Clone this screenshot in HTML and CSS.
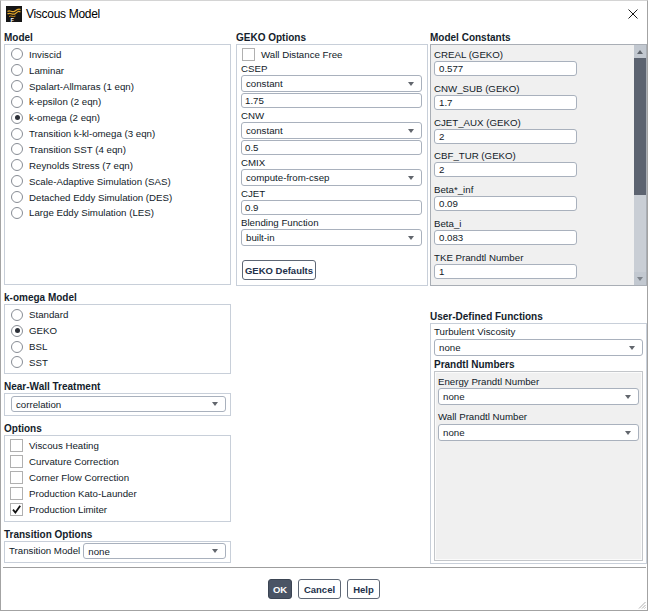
FILE: index.html
```html
<!DOCTYPE html>
<html>
<head>
<meta charset="utf-8">
<title>Viscous Model</title>
<link rel="stylesheet" href="styles.css">
</head>
<body>
<div class="window">
  <div class="titlebar">
    <svg class="appicon" width="16" height="16" viewBox="0 0 16 16">
      <rect width="16" height="16" fill="#151515"/>
      <path d="M1.5 5.5 C4 3, 6 7.5, 9 5 S13 2.5, 14.5 3.5" stroke="#e3a62a" stroke-width="1.2" fill="none"/>
      <path d="M1.5 8 C4 5.5, 6.5 10, 9.5 7.5 S13 5, 14.5 6" stroke="#e3a62a" stroke-width="1.2" fill="none"/>
      <path d="M3 10.5 C5 9, 7 11.5, 9.5 10" stroke="#c78a1c" stroke-width="1" fill="none"/>
      <text x="4.5" y="15.6" font-size="5.5" font-weight="bold" fill="#ffffff" font-family="Liberation Sans, sans-serif">F</text>
    </svg>
    <span class="title">Viscous Model</span>
    <svg class="close" width="10" height="10" viewBox="0 0 10 10">
      <path d="M0.5 0.5 L9.5 9.5 M9.5 0.5 L0.5 9.5" stroke="#1a1a1a" stroke-width="1" fill="none"/>
    </svg>
  </div>

  <div class="main">
    <div class="col col1">
      <div class="sec-label">Model</div>
      <div class="box box-model">
        <div class="opt"><span class="radio"></span>Inviscid</div>
        <div class="opt"><span class="radio"></span>Laminar</div>
        <div class="opt"><span class="radio"></span>Spalart-Allmaras (1 eqn)</div>
        <div class="opt"><span class="radio"></span>k-epsilon (2 eqn)</div>
        <div class="opt"><span class="radio on"></span>k-omega (2 eqn)</div>
        <div class="opt"><span class="radio"></span>Transition k-kl-omega (3 eqn)</div>
        <div class="opt"><span class="radio"></span>Transition SST (4 eqn)</div>
        <div class="opt"><span class="radio"></span>Reynolds Stress (7 eqn)</div>
        <div class="opt"><span class="radio"></span>Scale-Adaptive Simulation (SAS)</div>
        <div class="opt"><span class="radio"></span>Detached Eddy Simulation (DES)</div>
        <div class="opt"><span class="radio"></span>Large Eddy Simulation (LES)</div>
      </div>

      <div class="sec-label mt">k-omega Model</div>
      <div class="box box-komega">
        <div class="opt"><span class="radio"></span>Standard</div>
        <div class="opt"><span class="radio on"></span>GEKO</div>
        <div class="opt"><span class="radio"></span>BSL</div>
        <div class="opt"><span class="radio"></span>SST</div>
      </div>

      <div class="sec-label mt">Near-Wall Treatment</div>
      <div class="box box-near">
        <div class="sel sel-short"><span>correlation</span></div>
      </div>

      <div class="sec-label mt">Options</div>
      <div class="box box-options">
        <div class="opt"><span class="chk"></span>Viscous Heating</div>
        <div class="opt"><span class="chk"></span>Curvature Correction</div>
        <div class="opt"><span class="chk"></span>Corner Flow Correction</div>
        <div class="opt"><span class="chk"></span>Production Kato-Launder</div>
        <div class="opt"><span class="chk"><svg width="11" height="11" viewBox="0 0 11 11"><path d="M2 5.6 L4.4 8.6 L9.2 1.8" stroke="#111" stroke-width="1.8" fill="none"/></svg></span>Production Limiter</div>
      </div>

      <div class="sec-label mt">Transition Options</div>
      <div class="box box-trans">
        <span class="trans-text">Transition Model</span>
        <div class="sel sel-short sel-trans"><span>none</span></div>
      </div>
    </div>

    <div class="col col2">
      <div class="sec-label">GEKO Options</div>
      <div class="box box-geko">
        <div class="chk-row"><span class="chk chk-geko"></span>Wall Distance Free</div>
        <div class="flabel">CSEP</div>
        <div class="sel"><span>constant</span></div>
        <div class="inp inp-after">1.75</div>
        <div class="flabel">CNW</div>
        <div class="sel"><span>constant</span></div>
        <div class="inp inp-after">0.5</div>
        <div class="flabel">CMIX</div>
        <div class="sel"><span>compute-from-csep</span></div>
        <div class="flabel">CJET</div>
        <div class="inp">0.9</div>
        <div class="flabel">Blending Function</div>
        <div class="sel"><span>built-in</span></div>
        <button class="btn btn-defaults">GEKO Defaults</button>
      </div>
    </div>

    <div class="col col3">
      <div class="sec-label">Model Constants</div>
      <div class="box box-const">
        <div class="const-list">
          <div class="cgroup"><div class="flabel">CREAL (GEKO)</div><div class="inp inp-const">0.577</div></div>
          <div class="cgroup"><div class="flabel">CNW_SUB (GEKO)</div><div class="inp inp-const">1.7</div></div>
          <div class="cgroup"><div class="flabel">CJET_AUX (GEKO)</div><div class="inp inp-const">2</div></div>
          <div class="cgroup"><div class="flabel">CBF_TUR (GEKO)</div><div class="inp inp-const">2</div></div>
          <div class="cgroup"><div class="flabel">Beta*_inf</div><div class="inp inp-const">0.09</div></div>
          <div class="cgroup"><div class="flabel">Beta_i</div><div class="inp inp-const">0.083</div></div>
          <div class="cgroup"><div class="flabel">TKE Prandtl Number</div><div class="inp inp-const">1</div></div>
        </div>
        <div class="scrollbar">
          <div class="sb-btn"><span class="tri-up"></span></div>
          <div class="sb-thumb"></div>
          <div class="sb-track"></div>
          <div class="sb-btn"><span class="tri-down"></span></div>
        </div>
      </div>

      <div class="sec-label udf-label">User-Defined Functions</div>
      <div class="box box-udf">
        <div class="flabel">Turbulent Viscosity</div>
        <div class="sel sel-mt"><span>none</span></div>
        <div class="plabel">Prandtl Numbers</div>
        <div class="pbox">
          <div class="flabel">Energy Prandtl Number</div>
          <div class="sel"><span>none</span></div>
          <div class="flabel flabel-mt">Wall Prandtl Number</div>
          <div class="sel sel-mt"><span>none</span></div>
        </div>
      </div>
    </div>
  </div>

  <div class="sep"></div>
  <div class="footer">
    <button class="btn btn-primary btn-ok">OK</button>
    <button class="btn btn-cancel">Cancel</button>
    <button class="btn btn-help">Help</button>
  </div>
  <svg class="grip" width="8" height="8" viewBox="0 0 8 8">
    <path d="M7.5 1 L1 7.5 M7.5 4 L4 7.5 M7.5 6.5 L6.5 7.5" stroke="#9a9a9a" stroke-width="0.8" fill="none"/>
  </svg>
</div>
</body>
</html>
```

FILE: styles.css
```css
* {
  box-sizing: border-box;
  margin: 0;
  padding: 0;
}

html, body {
  background: #ffffff;
}

body {
  font-family: "Liberation Sans", Arial, sans-serif;
  font-size: 9.7px;
  color: #111a28;
}

.window {
  position: relative;
  width: 648px;
  height: 611px;
  border: 1px solid #a3a3a3;
  border-top-color: #d4d4d4;
  background: #ffffff;
  display: flex;
  flex-direction: column;
}

/* title bar */
.titlebar {
  flex: none;
  height: 29px;
  display: flex;
  align-items: flex-start;
  padding: 5px 0 0 5px;
}

.appicon {
  flex: none;
}

.title {
  margin-left: 4px;
  font-size: 12px;
  line-height: 16px;
  letter-spacing: -0.3px;
  color: #000000;
}

.close {
  margin-left: auto;
  margin-top: 3px;
  margin-right: 9px;
}

/* main area */
.main {
  flex: none;
  height: 537px;
  display: flex;
  padding: 1px 0 0 3px;
}

.col {
  display: flex;
  flex-direction: column;
  flex: none;
}

.col1 { width: 227px; }
.col2 { width: 192px; margin-left: 5px; }
.col3 { width: 217px; margin-left: 2px; }

.sec-label {
  font-weight: bold;
  font-size: 10px;
  line-height: 13px;
  height: 12px;
  margin-bottom: 1px;
  white-space: nowrap;
  color: #141d2c;
}

.sec-label.mt { margin-top: 6px; }

.box {
  border: 1px solid #c8cfd9;
  background: #ffffff;
}

/* radio / checkbox rows */
.opt {
  display: flex;
  align-items: center;
  height: 15.85px;
  white-space: nowrap;
}

.radio {
  flex: none;
  width: 12px;
  height: 12px;
  margin: 0 6px;
  border: 1px solid #878c94;
  border-radius: 50%;
  background: #ffffff;
  display: flex;
  align-items: center;
  justify-content: center;
}

.radio.on::after {
  content: "";
  width: 5px;
  height: 5px;
  border-radius: 50%;
  background: #2c3038;
}

.chk {
  flex: none;
  width: 13px;
  height: 13px;
  margin: 0 6px 0 5px;
  border: 1px solid #b0b0b0;
  background: #ffffff;
  display: flex;
  align-items: center;
  justify-content: center;
}

.box-model {
  height: 241px;
  padding-top: 1.5px;
}

.box-komega {
  height: 70px;
  padding-top: 2px;
}

.box-near {
  height: 23px;
  padding: 2px 4px 0 6px;
}

.box-options {
  height: 87px;
  padding-top: 2px;
}

.box-trans {
  height: 22px;
  padding: 1px 4px 0 4px;
  display: flex;
  align-items: flex-start;
}

.trans-text {
  line-height: 16px;
  white-space: nowrap;
}

/* select / input */
.sel {
  height: 17px;
  border: 1px solid #a9b1bd;
  border-radius: 3px;
  background: #ffffff;
  display: flex;
  align-items: center;
  justify-content: space-between;
  padding: 0 7px 0 4px;
  white-space: nowrap;
}

.sel::after {
  content: "";
  flex: none;
  border-left: 3.5px solid transparent;
  border-right: 3.5px solid transparent;
  border-top: 4px solid #62666d;
}

.sel-short {
  height: 16px;
}

.sel-trans {
  flex: 1;
  margin-left: 3px;
}

.sel-mt { margin-top: 1px; }

.inp {
  height: 15px;
  border: 1px solid #a9b1bd;
  border-radius: 3px;
  background: #ffffff;
  display: flex;
  align-items: center;
  padding-left: 3px;
}

.inp-after { margin-top: 1px; }

.flabel {
  height: 14px;
  line-height: 15px;
  white-space: nowrap;
}

.flabel-mt { margin-top: 4px; }

/* GEKO */
.box-geko {
  height: 242px;
  padding: 2px 5px 0 4px;
}

.chk-row {
  display: flex;
  align-items: center;
  height: 14px;
  white-space: nowrap;
}

.chk-geko {
  margin-left: 1px;
}

/* buttons */
.btn {
  font-family: "Liberation Sans", Arial, sans-serif;
  font-weight: bold;
  font-size: 9.5px;
  color: #22304a;
  height: 20px;
  border: 1px solid #5e6775;
  border-radius: 3px;
  background: #ffffff;
  display: flex;
  align-items: center;
  justify-content: center;
  white-space: nowrap;
}

.btn-defaults {
  width: 74px;
  margin: 14px 0 0 1px;
}

.btn-primary {
  background: #4a5465;
  border-color: #3b4453;
  color: #ffffff;
}

.btn-ok { width: 24px; }
.btn-cancel { width: 43px; }
.btn-help { width: 33px; }

/* Model constants */
.box-const {
  height: 242px;
  background: #f0f0f0;
  border-color: #a9aeb5;
  display: flex;
}

.const-list {
  flex: 1;
  padding: 2px 0 0 3px;
  overflow: hidden;
}

.cgroup {
  height: 33.8px;
}

.inp-const {
  width: 143px;
  padding-left: 4px;
}

.scrollbar {
  flex: none;
  width: 12px;
  display: flex;
  flex-direction: column;
  background: #c9ced5;
}

.sb-btn {
  height: 13px;
  display: flex;
  align-items: center;
  justify-content: center;
  background: #c2c8d0;
}

.tri-up {
  border-left: 3.5px solid transparent;
  border-right: 3.5px solid transparent;
  border-bottom: 4px solid #5f646c;
}

.tri-down {
  border-left: 3.5px solid transparent;
  border-right: 3.5px solid transparent;
  border-top: 4px solid #7c828a;
}

.sb-thumb {
  height: 137px;
  background: #5c6370;
}

.sb-track {
  flex: 1;
}

/* UDF */
.udf-label {
  margin-top: 24px;
}

.box-udf {
  height: 241px;
  padding: 0 3px;
}

.plabel {
  font-weight: bold;
  font-size: 10px;
  height: 14px;
  line-height: 15px;
  margin-top: 1px;
  color: #141d2c;
}

.pbox {
  height: 190px;
  border: 1px solid #c3c6ca;
  box-shadow: inset 0 0 0 1px #fbfbfb;
  background: #f0f0f0;
  padding: 2px 3px 0 3px;
}

/* footer */
.sep {
  flex: none;
  height: 1px;
  margin: 0 1px 0 2px;
  background: #9f9f9f;
}

.footer {
  flex: 1;
  display: flex;
  justify-content: center;
  align-items: flex-start;
  gap: 6px;
  padding-top: 11px;
}

.grip {
  position: absolute;
  right: 1px;
  bottom: 1px;
}
```
